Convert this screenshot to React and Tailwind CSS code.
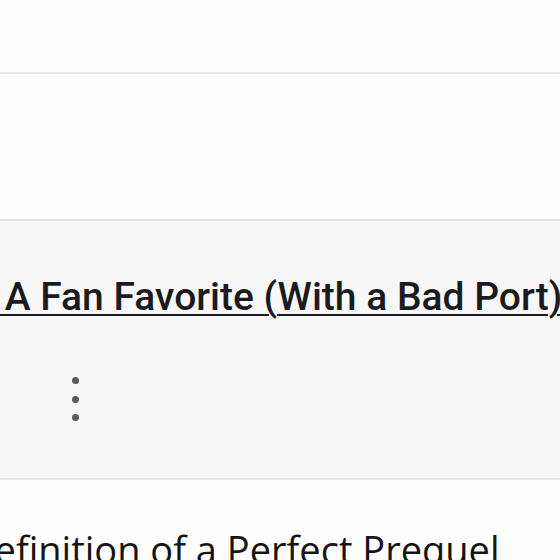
import React from 'react';

const App = () => {
  return (
    <div className="w-[560px] h-[560px] overflow-hidden bg-[#fefefe] font-['Roboto',sans-serif]">
      {/* Top empty row */}
      <div className="h-[74px] border-b-2 border-[#e6e6e6]" />

      {/* Second empty row */}
      <div className="h-[147px] border-b-2 border-[#e6e6e6]" />

      {/* Highlighted row with title and actions */}
      <div className="h-[259px] bg-[#f7f7f7] border-b-2 border-[#e4e4e4] pt-[53px]">
        <a
          href="#"
          className="block whitespace-nowrap -ml-[5px] text-[39px] font-medium leading-[46px] text-[#1b1b1f] underline decoration-2 underline-offset-[4px]"
        >
          {'\u00A0A Fan Favorite (With a Bad Port)'}
        </a>
        <button className="mt-[57px] ml-[72px] flex flex-col gap-[11.5px]">
          <span className="block w-[7px] h-[7px] rounded-full bg-[#5a5a5a]" />
          <span className="block w-[7px] h-[7px] rounded-full bg-[#5a5a5a]" />
          <span className="block w-[7px] h-[7px] rounded-full bg-[#5a5a5a]" />
        </button>
      </div>

      {/* Next row */}
      <div className="pt-[44px]">
        <div className="whitespace-nowrap -ml-[33px] text-[38px] font-medium leading-[50px] text-[#141414] font-['Open_Sans',sans-serif]">
          Definition of a Perfect Prequel
        </div>
      </div>
    </div>
  );
};

export default App;
